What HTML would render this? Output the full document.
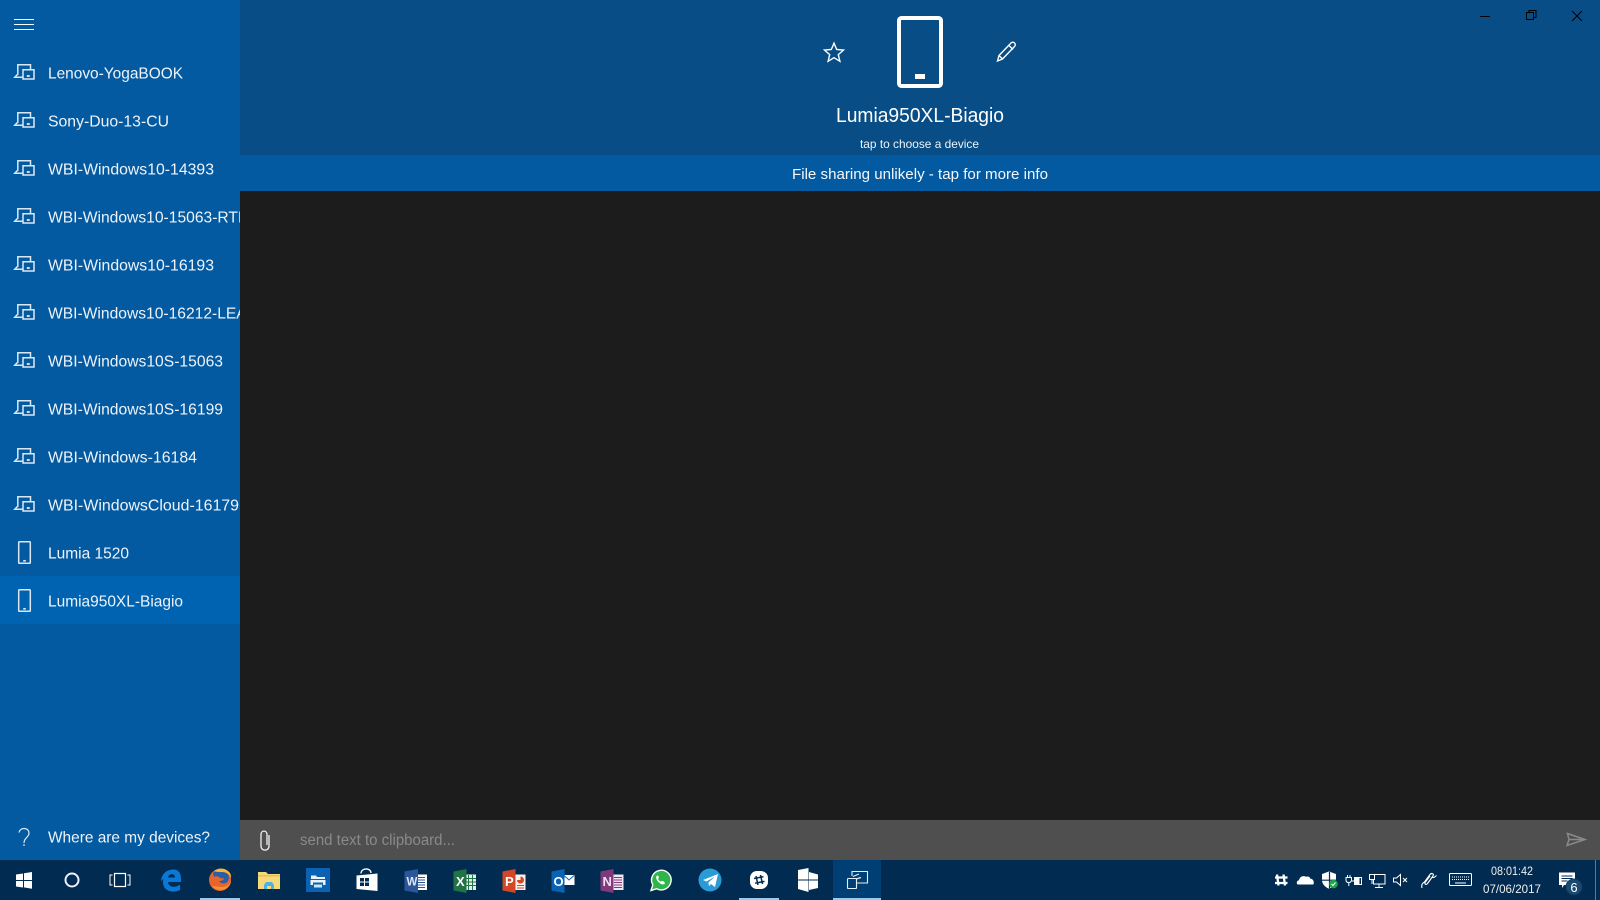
<!DOCTYPE html>
<html lang="en"><head><meta charset="utf-8"><title>Share</title>
<style>
html,body{margin:0;padding:0;width:1600px;height:900px;overflow:hidden;background:#1c1c1c}
svg{display:block}
text{font-family:"Liberation Sans",sans-serif;fill:#fff}
.r{font-size:16px;fill:#eef3f9}
</style></head><body>
<svg width="1600" height="900" viewBox="0 0 1600 900" xmlns="http://www.w3.org/2000/svg">
<defs>
<clipPath id="side"><rect x="0" y="0" width="240" height="860"/></clipPath>
<g id="dev" fill="none" stroke="#dbe8f4" stroke-width="1.500">
<path d="M17.800 75V64.800h12.700v4.400"/><path d="M23 69.800h11v9.200H23z"/><path d="M22.500 77.300H14.800l2.600-2.800"/><path d="M26.800 76h3" stroke-width="1.800"/>
</g>
<g id="ph" fill="none" stroke="#dbe8f4" stroke-width="1.500">
<rect x="18.700" y="-11.300" width="11.600" height="21.600" rx=".8"/><path d="M23.200 7.800h2.600" stroke-width="1.700"/>
</g>
</defs>

<rect width="1600" height="900" fill="#1c1c1c"/>
<rect x="0" y="0" width="240" height="860" fill="#045aa1"/>
<rect x="0" y="576" width="240" height="48" fill="#0063b1"/>
<rect x="240" y="0" width="1360" height="155" fill="#084d85"/>
<rect x="240" y="155" width="1360" height="36" fill="#045aa1"/>
<rect x="240" y="820" width="1360" height="40" fill="#4f4f4f"/>
<rect x="0" y="860" width="1600" height="40" fill="#012b50"/>

<!-- hamburger -->
<path d="M14 19.500h20M14 24.500h20M14 29.500h20" stroke="#fff" stroke-width="1"/>

<!-- device list -->
<g clip-path="url(#side)">
<use href="#dev"/><use href="#dev" y="48"/><use href="#dev" y="96"/><use href="#dev" y="144"/><use href="#dev" y="192"/><use href="#dev" y="240"/><use href="#dev" y="288"/><use href="#dev" y="336"/><use href="#dev" y="384"/><use href="#dev" y="432"/>
<g transform="translate(0,553)"><use href="#ph"/></g>
<g transform="translate(0,601)"><use href="#ph"/></g>
<text class="r" x="48" y="78.500" textLength="135" lengthAdjust="spacingAndGlyphs">Lenovo-YogaBOOK</text>
<text class="r" x="48" y="126.500" textLength="121" lengthAdjust="spacingAndGlyphs">Sony-Duo-13-CU</text>
<text class="r" x="48" y="174.500" textLength="166" lengthAdjust="spacingAndGlyphs">WBI-Windows10-14393</text>
<text class="r" x="48" y="222.500" textLength="203" lengthAdjust="spacingAndGlyphs">WBI-Windows10-15063-RTM</text>
<text class="r" x="48" y="270.500" textLength="166" lengthAdjust="spacingAndGlyphs">WBI-Windows10-16193</text>
<text class="r" x="48" y="318.500" textLength="210" lengthAdjust="spacingAndGlyphs">WBI-Windows10-16212-LEAN</text>
<text class="r" x="48" y="366.500" textLength="175" lengthAdjust="spacingAndGlyphs">WBI-Windows10S-15063</text>
<text class="r" x="48" y="414.500" textLength="175" lengthAdjust="spacingAndGlyphs">WBI-Windows10S-16199</text>
<text class="r" x="48" y="462.500" textLength="149" lengthAdjust="spacingAndGlyphs">WBI-Windows-16184</text>
<text class="r" x="48" y="510.500" textLength="191" lengthAdjust="spacingAndGlyphs">WBI-WindowsCloud-16179</text>
<text class="r" x="48" y="558.500" textLength="81" lengthAdjust="spacingAndGlyphs">Lumia 1520</text>
<text class="r" x="48" y="606.500" textLength="135" lengthAdjust="spacingAndGlyphs">Lumia950XL-Biagio</text>
<text class="r" x="48" y="842.500" textLength="162" lengthAdjust="spacingAndGlyphs">Where are my devices?</text>
</g>
<!-- question mark icon -->
<path d="M19 832.500c.6-2.600 2.700-4 5-4 3 0 5 2 5 4.600 0 4.400-5 4.400-5 9.900" fill="none" stroke="#dbe8f4" stroke-width="1.200"/>
<circle cx="24" cy="845" r=".9" fill="#dbe8f4"/>

<!-- header -->
<path d="M834 43.200l2.700 6.300 6.800.6-5.200 4.500 1.600 6.700-5.900-3.600-5.900 3.600 1.600-6.700-5.200-4.500 6.800-.6z" fill="none" stroke="#fff" stroke-width="1.400"/>
<rect x="899" y="18" width="42" height="68" rx="2.500" fill="none" stroke="#fff" stroke-width="4"/>
<rect x="915" y="74" width="10" height="5" fill="#fff"/>
<path d="M997.500 61l1.500-5.500 12-12.500c1-1 2.500-1 3.500 0s1 2.500 0 3.500L1002.500 59zM1009 45.500l4 4M999 55.500l3.500 3.500" fill="none" stroke="#fff" stroke-width="1.400"/>
<text x="920" y="122" text-anchor="middle" font-size="20" textLength="168" lengthAdjust="spacingAndGlyphs">Lumia950XL-Biagio</text>
<text x="860" y="148" font-size="12" textLength="119" lengthAdjust="spacingAndGlyphs" style="fill:#eef3f9">tap to choose a device</text>
<text x="792" y="179" font-size="15" textLength="256" lengthAdjust="spacingAndGlyphs" style="fill:#f4f7fb">File sharing unlikely - tap for more info</text>

<!-- window controls -->
<path d="M1480 16.500h10" stroke="#000" stroke-width="1"/>
<path d="M1526.500 12.500h7v7h-7zM1529 12.500v-2h7v7h-2.500" fill="none" stroke="#000" stroke-width="1"/>
<path d="M1572 11l10 10M1582 11l-10 10" stroke="#000" stroke-width="1"/>

<!-- input bar -->
<path d="M269 835v11c0 5.500-8 5.500-8 0v-11.500c0-4.500 6-4.500 6 0V845" fill="none" stroke="#f0f0f0" stroke-width="1.300"/>
<text x="300" y="845" font-size="15.500" textLength="155" lengthAdjust="spacingAndGlyphs" style="fill:#8a8a8a">send text to clipboard...</text>
<path d="M1567.500 833.500l17.500 6-18 6 2-6zM1569 839.500h16" fill="none" stroke="#8a8a8a" stroke-width="1.500"/>

<!-- taskbar -->
<path d="M16 874.500l7-1v6.500h-7zM24 873.300l8-1.300v8h-8zM16 881h7v6.500l-7-1zM24 881h8v7.700l-8-1.300z" fill="#fff"/>
<circle cx="72" cy="880" r="6.500" fill="none" stroke="#eef" stroke-width="2"/>
<path d="M114.500 873.500h11v13h-11z" fill="none" stroke="#fff" stroke-width="1.200"/>
<path d="M112.500 875H110v10h2.500M127.500 875h2.500v10h-2.500" fill="none" stroke="#fff" stroke-width="1"/>

<!-- edge -->
<path d="M161 881c.5-7 6-11.500 12-11.500 5.500 0 8 3.500 8 9.500v3h-13c.3 5 7 6.500 12 2.500v5.500c-7 3.500-17 1.500-17-8 0-1 .1-2 .5-3-1.500 1-2.200 1.500-2.500 2.500zM168 877.500h7c0-4.500-6-4.500-7 0z" fill="#0a78d6" fill-rule="evenodd"/>
<!-- firefox -->
<circle cx="220" cy="880" r="11" fill="#e8642a"/>
<path d="M213 873c4-4 12-4 15 1 2 4 0 8-2 9-3 1-6 0-7-2 3 0 5-1 5-3-2 1-4 0-5-1-2-1-4-1-5 0z" fill="#2a5ea6"/>
<path d="M214 871c5-4 12-3 16 2 1 2 1 3 1 5-2-4-5-6-9-6-3 0-6 0-8-1z" fill="#f7b53c"/>
<path d="M212 886c3 4 11 6 16 1 2-2 3-4 3-6-2 4-5 6-9 6-4 0-7-1-10-1z" fill="#f4902f"/>
<rect x="200" y="898" width="40" height="2" fill="#99c9ef"/>
<!-- folder -->
<path d="M258 872h8l2 2h12v15h-22z" fill="#f6d978"/>
<rect x="258" y="875" width="22" height="1.500" fill="#e8bf55"/>
<path d="M264 889v-4l2-3h6l2 3v4h-3v-3h-4v3z" fill="#4db3e6"/>
<!-- explorer tile -->
<rect x="306" y="868" width="24" height="24" fill="#0a62b3"/>
<path d="M311 875.500h5l1 1.500h8v2h-14zM310.500 880h15v5h-2.500v-2.500h-10v2.500h-2.500z" fill="#e8f2fa"/>
<rect x="314" y="884.500" width="8" height="3" fill="#cfe4f5"/>
<!-- store -->
<path d="M356.500 875.500l21-2v17.500l-21-2z" fill="#fff"/>
<path d="M361 873.500c0-6 10-6 10-.5" fill="none" stroke="#fff" stroke-width="1.300"/>
<path d="M360 878h4v3.500h-4zM365 878h4v3.500h-4zM360 882.500h4v3.500h-4zM365 882.500h4v3.500h-4z" fill="#012b50"/>
<!-- word -->
<path d="M415 874.500h12v15.500h-12z" fill="#fff"/>
<path d="M418 877.500h7M418 880h7M418 882.500h7M418 885h7M418 887.500h7" stroke="#2b579a" stroke-width="1"/>
<path d="M404.500 871.500l13.500-2.500v24l-13.500-2.500z" fill="#2b579a"/>
<text x="406.500" y="885.500" font-size="11.500" font-weight="700" style="fill:#dfe8f5">W</text>
<!-- excel -->
<path d="M464 874.500h12v15.500h-12z" fill="#dff0e6"/>
<path d="M468.500 875v15M472.500 875v15M464 878.500h12M464 882h12M464 885.500h12" stroke="#217346" stroke-width="1"/>
<path d="M453.500 871.500l13-2.500v24l-13-2.500z" fill="#217346"/>
<text x="456" y="886" font-size="13" font-weight="700" style="fill:#fff">X</text>
<!-- powerpoint -->
<path d="M514 874.500h11.500V890H514z" fill="#fdf0ea"/>
<path d="M517 880a3.500 3.500 0 1 0 3.500-3.500v3.500z" fill="#d24726"/>
<path d="M517 885.500h7M517 888h7" stroke="#d24726"/>
<path d="M502.500 871.500l13-2.500v24l-13-2.500z" fill="#d24726"/>
<text x="505" y="886" font-size="13" font-weight="700" style="fill:#fff">P</text>
<!-- outlook -->
<rect x="563" y="875" width="11.500" height="10" fill="#fff"/>
<path d="M564 875.500l5 4.500 5-4.500" fill="none" stroke="#0a62b3"/>
<path d="M551.500 871.500l13-2.500v24l-13-2.500z" fill="#0a62b3"/>
<text x="553.500" y="886" font-size="13" font-weight="700" style="fill:#fff">O</text>
<!-- onenote -->
<path d="M612 874.500h11.500V890H612z" fill="#f3e6f3"/>
<path d="M614 877.500h8M614 880h8M614 882.500h8M614 885h8M614 887.500h8" stroke="#80397b"/>
<path d="M600.500 871.500l13-2.500v24l-13-2.500z" fill="#80397b"/>
<text x="602.500" y="886" font-size="13" font-weight="700" style="fill:#f0dff0">N</text>
<!-- whatsapp -->
<path d="M651 890.500l1.800-5.600a9.800 9.800 0 1 1 3.900 3.800z" fill="#2fb54a" stroke="#fff" stroke-width="1.400"/>
<path d="M657 875.500c-1.500 1.500-1 4 1.500 6.500s5 3 6.500 1.500l-1-2-2.200-.8-1 1c-1.300-.6-2.300-1.600-2.800-2.800l1-1-.8-2.200z" fill="#fff"/>
<!-- telegram -->
<circle cx="710" cy="880" r="11.500" fill="#2b9bd6"/>
<path d="M703 880l15-6-3 13-4-3-2 2-.6-3.500 6.600-6-8.500 5z" fill="#fff"/>
<!-- slack -->
<rect x="750" y="871" width="18" height="18" rx="7" fill="#fff"/>
<path d="M756 876l2 9M760.500 875l2 9M754 878.500l9.500-1.800M755 883.200l9.500-1.800" stroke="#012b50" stroke-width="1.500" fill="none"/>
<rect x="739" y="898" width="40" height="2" fill="#99c9ef"/>
<!-- tiles -->
<path d="M798 870l10.500-2v11.500H798zM809 872l9 2.500v5h-9zM798 880.500h10.500V892l-10.500-3zM809 880.500h9v7.500l-9 2z" fill="#fff"/>
<!-- active app -->
<rect x="833" y="860" width="48" height="40" fill="#003f74"/>
<rect x="833" y="898" width="48" height="2" fill="#99c9ef"/>
<path d="M852 876v-4.500h15.500v11.500H857" fill="none" stroke="#e6eef6" stroke-width="1.100"/>
<rect x="847.500" y="878.500" width="9" height="10" rx=".8" fill="#003f74" stroke="#e6eef6" stroke-width="1.100"/>
<path d="M853 876.500l6-2.500M856 879l5-1.500" stroke="#e6eef6" stroke-width="1.200"/>

<!-- tray -->
<g fill="none" stroke="#fff">
<path d="M1277 874.500l1.500 11M1283.500 874.500l1.500 11M1275 877.500h12.500M1275 883h12.500" stroke-width="2.300"/>
<path d="M1297.500 884.500c-1.500-1.500-.5-4 1.500-4.200.5-3.300 4-5.300 7-3.500 1.500-.8 4-.2 4.300 2 3-.2 4.300 3.700 3 5.700z" fill="#fff" stroke="none"/>
<path d="M1322 874l7-2.500 7 2.500v6c0 4-3 7-7 8.800-4-1.800-7-4.800-7-8.800z" fill="#fff" stroke="none"/>
<path d="M1329.500 872v16.500M1322 880.200h14" stroke="#012b50" stroke-width="1.200"/>
<circle cx="1333.500" cy="884" r="4.300" fill="#22a34a" stroke="none"/>
<path d="M1331.500 884l1.500 1.500 2.500-3" stroke="#fff" stroke-width="1"/>
<path d="M1346 877.500h5.500v2.500c0 1.500-1 2.500-2.700 2.500s-2.800-1-2.800-2.500zM1347.500 875v2.500M1350 875v2.500M1348.800 882.500v3.500" stroke-width="1"/>
<path d="M1352 881h2" stroke-width="1"/>
<path d="M1354.500 877.500h7v7h-7z" stroke-width="1"/><rect x="1355" y="878" width="4.500" height="6" fill="#fff" stroke="none"/>
<rect x="1373.500" y="874.500" width="11.500" height="9.500" stroke-width="1"/>
<rect x="1369.500" y="874.500" width="5" height="5" fill="#012b50" stroke-width="1"/>
<path d="M1372 880v4M1379 884v3M1375 887.500h8" stroke-width="1"/>
<path d="M1393.500 878h3l4-3.500v11l-4-3.500h-3z" stroke-width="1"/>
<path d="M1403 878l4 4M1407 878l-4 4" stroke-width="1"/>
<path d="M1422 888c-1-3 .5-5 2.500-6l5.500-7.500c1.500-2 4.500-.5 3 1.500l-5.500 7.500c-1 1.500-3 1-2.500-1l5-6.500M1432 877.500h2l2.500-2" stroke-width="1.100"/>
<rect x="1449.500" y="873.500" width="22" height="12" rx="1" stroke-width="1"/>
</g>
<path d="M1452 877h17M1452 879.500h17" stroke="#fff" stroke-width="1" stroke-dasharray="1 1"/>
<path d="M1455 883h11" stroke="#fff" stroke-width="1"/>
<text x="1512" y="875" text-anchor="middle" font-size="12" textLength="42" lengthAdjust="spacingAndGlyphs" style="fill:#f0f0f0">08:01:42</text>
<text x="1512" y="893" text-anchor="middle" font-size="12" textLength="58" lengthAdjust="spacingAndGlyphs" style="fill:#f0f0f0">07/06/2017</text>
<path d="M1559 872.500h16v12.500h-11l-2 3v-3h-3z" fill="#fff"/>
<path d="M1561.500 876h11M1561.500 878.500h11M1561.500 881h6" stroke="#012b50" stroke-width="1"/>
<circle cx="1574" cy="887" r="8" fill="#1a4a72" stroke="#0c3a60"/>
<text x="1574" y="892" text-anchor="middle" font-size="13" style="fill:#fff">6</text>
<rect x="1595" y="860" width="1" height="40" fill="#5c7a94"/>
</svg>
</body></html>
